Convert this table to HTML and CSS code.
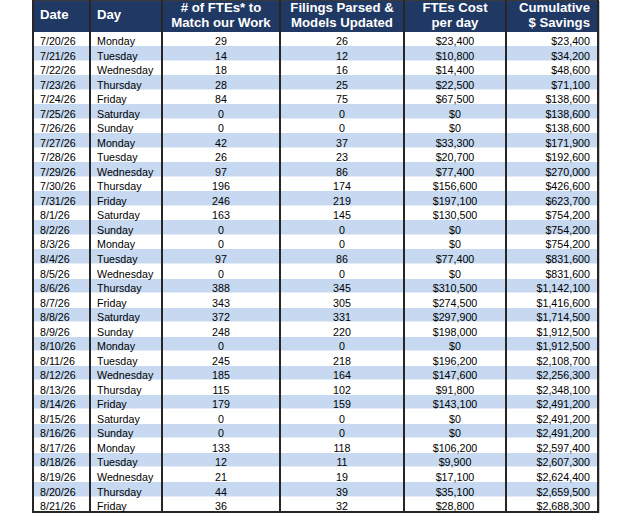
FILE: index.html
```html
<!DOCTYPE html>
<html>
<head>
<meta charset="utf-8">
<link rel="stylesheet" href="styles.css">
</head>
<body>
<div class="wrap">
<table class="sheet">
<colgroup>
<col class="c-date"><col class="c-day"><col class="c-fte"><col class="c-fil"><col class="c-cost"><col class="c-cum">
</colgroup>
<thead>
<tr>
<th class="l">Date</th>
<th class="l">Day</th>
<th>#&nbsp;of FTEs* to<br>Match our Work</th>
<th>Filings Parsed &amp;<br>Models Updated</th>
<th>FTEs Cost<br>per day</th>
<th class="r">Cumulative<br>$ Savings</th>
</tr>
</thead>
<tbody>
<tr><td>7/20/26</td><td>Monday</td><td>29</td><td>26</td><td>$23,400</td><td>$23,400</td></tr>
<tr><td>7/21/26</td><td>Tuesday</td><td>14</td><td>12</td><td>$10,800</td><td>$34,200</td></tr>
<tr><td>7/22/26</td><td>Wednesday</td><td>18</td><td>16</td><td>$14,400</td><td>$48,600</td></tr>
<tr><td>7/23/26</td><td>Thursday</td><td>28</td><td>25</td><td>$22,500</td><td>$71,100</td></tr>
<tr><td>7/24/26</td><td>Friday</td><td>84</td><td>75</td><td>$67,500</td><td>$138,600</td></tr>
<tr><td>7/25/26</td><td>Saturday</td><td>0</td><td>0</td><td>$0</td><td>$138,600</td></tr>
<tr><td>7/26/26</td><td>Sunday</td><td>0</td><td>0</td><td>$0</td><td>$138,600</td></tr>
<tr><td>7/27/26</td><td>Monday</td><td>42</td><td>37</td><td>$33,300</td><td>$171,900</td></tr>
<tr><td>7/28/26</td><td>Tuesday</td><td>26</td><td>23</td><td>$20,700</td><td>$192,600</td></tr>
<tr><td>7/29/26</td><td>Wednesday</td><td>97</td><td>86</td><td>$77,400</td><td>$270,000</td></tr>
<tr><td>7/30/26</td><td>Thursday</td><td>196</td><td>174</td><td>$156,600</td><td>$426,600</td></tr>
<tr><td>7/31/26</td><td>Friday</td><td>246</td><td>219</td><td>$197,100</td><td>$623,700</td></tr>
<tr><td>8/1/26</td><td>Saturday</td><td>163</td><td>145</td><td>$130,500</td><td>$754,200</td></tr>
<tr><td>8/2/26</td><td>Sunday</td><td>0</td><td>0</td><td>$0</td><td>$754,200</td></tr>
<tr><td>8/3/26</td><td>Monday</td><td>0</td><td>0</td><td>$0</td><td>$754,200</td></tr>
<tr><td>8/4/26</td><td>Tuesday</td><td>97</td><td>86</td><td>$77,400</td><td>$831,600</td></tr>
<tr><td>8/5/26</td><td>Wednesday</td><td>0</td><td>0</td><td>$0</td><td>$831,600</td></tr>
<tr><td>8/6/26</td><td>Thursday</td><td>388</td><td>345</td><td>$310,500</td><td>$1,142,100</td></tr>
<tr><td>8/7/26</td><td>Friday</td><td>343</td><td>305</td><td>$274,500</td><td>$1,416,600</td></tr>
<tr><td>8/8/26</td><td>Saturday</td><td>372</td><td>331</td><td>$297,900</td><td>$1,714,500</td></tr>
<tr><td>8/9/26</td><td>Sunday</td><td>248</td><td>220</td><td>$198,000</td><td>$1,912,500</td></tr>
<tr><td>8/10/26</td><td>Monday</td><td>0</td><td>0</td><td>$0</td><td>$1,912,500</td></tr>
<tr><td>8/11/26</td><td>Tuesday</td><td>245</td><td>218</td><td>$196,200</td><td>$2,108,700</td></tr>
<tr><td>8/12/26</td><td>Wednesday</td><td>185</td><td>164</td><td>$147,600</td><td>$2,256,300</td></tr>
<tr><td>8/13/26</td><td>Thursday</td><td>115</td><td>102</td><td>$91,800</td><td>$2,348,100</td></tr>
<tr><td>8/14/26</td><td>Friday</td><td>179</td><td>159</td><td>$143,100</td><td>$2,491,200</td></tr>
<tr><td>8/15/26</td><td>Saturday</td><td>0</td><td>0</td><td>$0</td><td>$2,491,200</td></tr>
<tr><td>8/16/26</td><td>Sunday</td><td>0</td><td>0</td><td>$0</td><td>$2,491,200</td></tr>
<tr><td>8/17/26</td><td>Monday</td><td>133</td><td>118</td><td>$106,200</td><td>$2,597,400</td></tr>
<tr><td>8/18/26</td><td>Tuesday</td><td>12</td><td>11</td><td>$9,900</td><td>$2,607,300</td></tr>
<tr><td>8/19/26</td><td>Wednesday</td><td>21</td><td>19</td><td>$17,100</td><td>$2,624,400</td></tr>
<tr><td>8/20/26</td><td>Thursday</td><td>44</td><td>39</td><td>$35,100</td><td>$2,659,500</td></tr>
<tr><td>8/21/26</td><td>Friday</td><td>36</td><td>32</td><td>$28,800</td><td>$2,688,300</td></tr>
</tbody>
</table>
</div>
</body>
</html>
```
FILE: styles.css
```css
html, body {
  margin: 0;
  padding: 0;
  background: #ffffff;
}

.wrap {
  padding-left: 32px;
}

.sheet {
  border-collapse: collapse;
  table-layout: fixed;
  width: 565px;
  font-family: "Liberation Sans", Arial, sans-serif;
  color: #000;
  border-top: 1px solid #3a3a3a;
  border-left: 2px solid #262626;
  border-right: 2px solid #262626;
  border-bottom: 2px solid #262626;
  box-shadow: 1px 1px 0 #c8c8c8;
}

.c-date { width: 57px; }
.c-day { width: 72px; }
.c-fte { width: 118px; }
.c-fil { width: 124px; }
.c-cost { width: 102px; }
.c-cum { width: 92px; }

.sheet th {
  background: #1f3864;
  color: #ffffff;
  font-weight: bold;
  font-size: 13.2px;
  line-height: 14.6px;
  height: 29.5px;
  padding: 0 2px 1px;
  text-align: center;
  vertical-align: middle;
  border-left: 2px solid #262626;
  border-right: 2px solid #262626;
  white-space: nowrap;
}

.sheet th.l {
  text-align: left;
  padding-left: 6px;
}

.sheet th.r {
  text-align: right;
  padding-right: 7px;
}

.sheet td {
  font-size: 10.7px;
  line-height: 10px;
  height: 14.54px;
  padding: 0 2px 0;
  vertical-align: bottom;
  text-align: center;
  border-left: 2px solid #262626;
  border-right: 2px solid #262626;
  white-space: nowrap;
}

.sheet tbody tr:nth-child(even) td {
  background: #c6d9f0;
  box-shadow: inset 0 -1px 0 #e4ecf7;
}

.sheet td:nth-child(1),
.sheet td:nth-child(2) {
  text-align: left;
  padding-left: 6px;
}

.sheet td:nth-child(6) {
  text-align: right;
  padding-right: 7px;
}
```
